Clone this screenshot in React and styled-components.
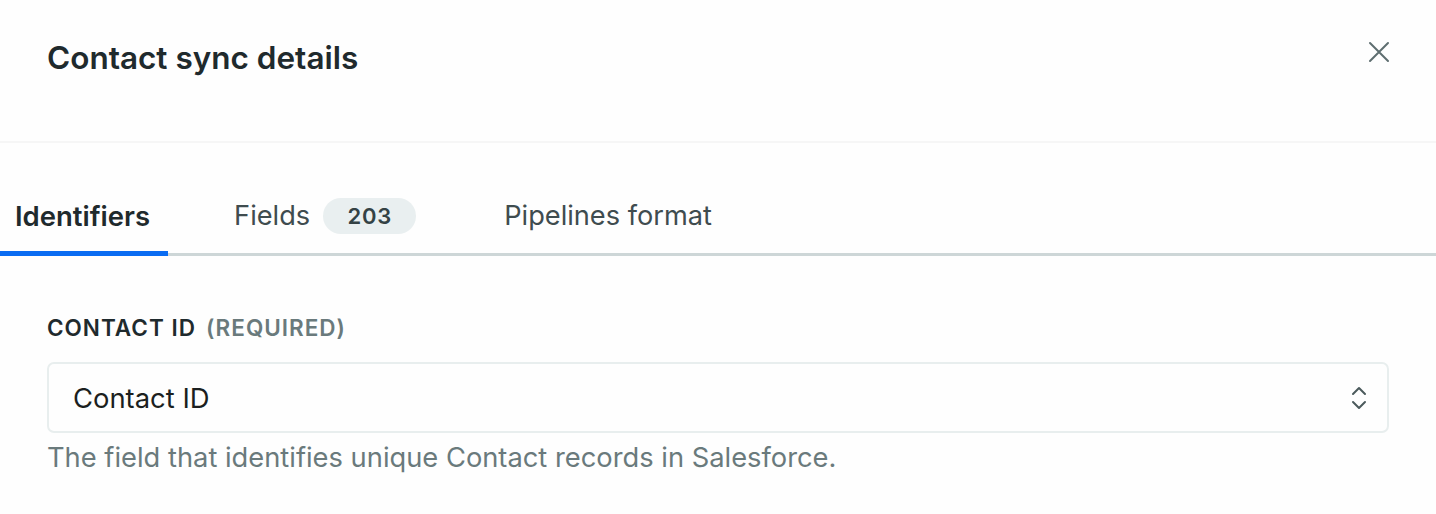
import React from "react";
import styled, { createGlobalStyle } from "styled-components";

const Global = createGlobalStyle`
  html, body { margin: 0; padding: 0; background: #fefefe; }
  body { font-family: Inter, "Noto Sans", sans-serif; -webkit-font-smoothing: antialiased; }
  * { box-sizing: border-box; }
`;

const Page = styled.div`
  width: 1436px;
  height: 514px;
  background: #fefefe;
  display: flex;
  flex-direction: column;
`;

const Header = styled.header`
  height: 143px;
  padding: 38px 47px 0 47px;
  display: flex;
  justify-content: space-between;
  align-items: flex-start;
  border-bottom: 2px solid #f6f6f6;
`;

const Title = styled.h1`
  margin: 0;
  font-size: 31.5px;
  line-height: 40px;
  font-weight: 600;
  color: #1f2a2d;
`;

const CloseButton = styled.button`
  border: 0;
  background: none;
  padding: 0;
  margin-right: -4px;
  width: 28px;
  height: 28px;
  display: flex;
  align-items: center;
  justify-content: center;
  color: #5e6e70;
  cursor: pointer;
`;

const TabList = styled.div`
  margin-top: 40px;
  display: flex;
  align-items: stretch;
  border-bottom: 3px solid #cdd6d7;
`;

const Tab = styled.div`
  display: flex;
  align-items: center;
  gap: 13px;
  height: 73px;
  padding: 0 ${(p) => p.$pr}px 3px ${(p) => p.$pl}px;
  margin-right: ${(p) => p.$mr}px;
  margin-bottom: -3px;
  font-size: ${(p) => (p.$active ? 27.5 : 27.2)}px;
  font-weight: ${(p) => (p.$active ? 600 : 400)};
  color: ${(p) => (p.$active ? "#1f2a2d" : "#3f4c4f")};
  border-bottom: 5px solid ${(p) => (p.$active ? "#0a6cf2" : "transparent")};
  white-space: nowrap;
`;

const Badge = styled.span`
  display: inline-flex;
  align-items: center;
  justify-content: center;
  height: 36px;
  width: 93px;
  border-radius: 18px;
  background: #e9eff0;
  color: #344245;
  font-size: 22px;
  font-weight: 600;
  letter-spacing: 0.8px;
`;

const Body = styled.div`
  padding: 58px 47px 0 47px;
  display: flex;
  flex-direction: column;
`;

const Label = styled.div`
  font-size: 22.5px;
  font-weight: 600;
  text-transform: uppercase;
  color: #1f2a2d;
  letter-spacing: 1px;
  line-height: 28px;
  display: flex;
  gap: 10px;
`;

const Muted = styled.span`
  color: #6a7a7c;
`;

const Select = styled.div`
  margin-top: 20px;
  height: 71px;
  border: 2px solid #e8eeee;
  border-radius: 7px;
  padding: 0 20px 0 24px;
  display: flex;
  align-items: center;
  justify-content: space-between;
  font-size: 27.4px;
  color: #1b1f20;
`;

const Help = styled.div`
  margin-top: 8px;
  font-size: 27.3px;
  color: #6a7a7c;
  line-height: 34px;
`;

export default function App() {
  return (
    <Page>
      <Global />
      <Header>
        <Title>Contact sync details</Title>
        <CloseButton aria-label="Close">
          <svg width="22" height="22" viewBox="0 0 22 22" fill="none" stroke="currentColor" strokeWidth="2" strokeLinecap="round">
            <path d="M2 2L20 20M20 2L2 20" />
          </svg>
        </CloseButton>
      </Header>
      <TabList>
        <Tab $active $pl={15} $pr={18} $mr={51}>Identifiers</Tab>
        <Tab $pl={15} $pr={16} $mr={56}>
          Fields <Badge>203</Badge>
        </Tab>
        <Tab $pl={16} $pr={16} $mr={0}>Pipelines format</Tab>
      </TabList>
      <Body>
        <Label>
          Contact ID <Muted>(Required)</Muted>
        </Label>
        <Select>
          <span>Contact ID</span>
          <svg width="16" height="24" viewBox="0 0 16 24" fill="none" stroke="#4b5a5c" strokeWidth="2" strokeLinecap="round" strokeLinejoin="round">
            <path d="M2 8L8 2L14 8M2 16L8 22L14 16" />
          </svg>
        </Select>
        <Help>The field that identifies unique Contact records in Salesforce.</Help>
      </Body>
    </Page>
  );
}
